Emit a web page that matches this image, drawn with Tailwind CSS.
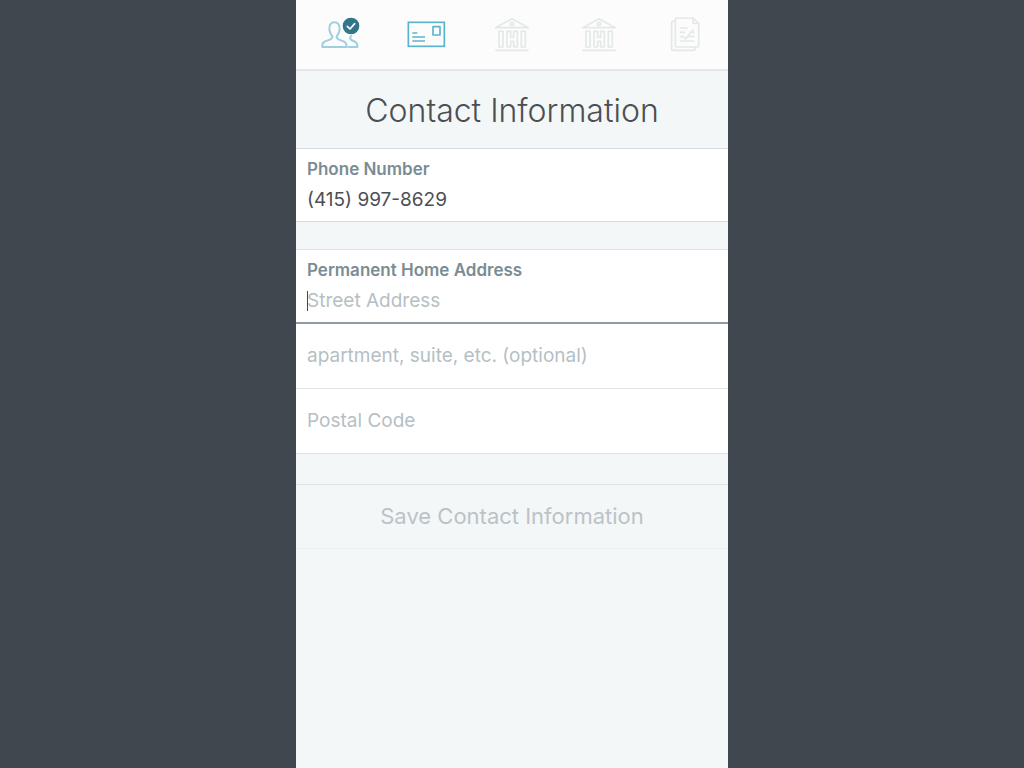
<!DOCTYPE html>
<html lang="en">
<head>
  <meta charset="UTF-8">
  <meta name="viewport" content="width=device-width, initial-scale=1">
  <title>Contact Information</title>
  <script src="https://cdn.jsdelivr.net/npm/@tailwindcss/browser@4"></script>
</head>
<body class="bg-[#40474e] font-[Inter,sans-serif] text-[#4b4f54]">
  <main class="w-full max-w-[432px] min-h-screen mx-auto bg-[#f4f7f7]">

    <!-- Step icons -->
    <nav aria-label="Steps" class="grid grid-cols-5 justify-items-center bg-[#fcfcfc] border-b-2 border-[#e3e5e7] pl-px pt-2 pb-[9px]">
      <a href="#profile" aria-label="Profile">
        <svg class="w-[60px] h-[52px]" viewBox="0 0 180 156" fill="none" stroke="#9dcfdf" stroke-width="6" stroke-linejoin="round" stroke-linecap="round">
          <path d="M37 117V112Q37 103 45 100L60 95Q67 92 67 85Q60 76 58 66Q57 43 73 43Q90 43 89 66Q87 76 80 85Q80 92 87 95L101 100Q110 104 110 117Z"/>
          <path d="M116 117H142Q143 106 136 102L124 96Q118 91 123 84"/>
          <circle cx="123" cy="54" r="25" fill="#33768a" stroke="none"/>
          <path d="M112 55L120 63L134 47" stroke="#fff" stroke-width="5"/>
        </svg>
      </a>
      <a href="#contact" aria-label="Contact" aria-current="step">
        <svg class="w-[60px] h-[52px]" viewBox="0 0 180 156" fill="none" stroke="#5bb2cd" stroke-width="5">
          <rect x="37" y="43" width="108" height="72"/>
          <rect x="111" y="56" width="21" height="25" rx="1"/>
          <path d="M49 75H64M49 87H87M49 99H87"/>
        </svg>
      </a>
      <a href="#bank" aria-label="Bank">
        <svg class="w-[60px] h-[52px]" viewBox="-3 0 180 156" fill="none" stroke="#e4e8e8" stroke-width="5" stroke-linejoin="round">
          <path d="M38 59L87 32L136 59Z"/>
          <circle cx="87" cy="48" r="5"/>
          <path d="M37 127H137"/>
          <path d="M48 70H60V117H48ZM72 70H83V88H92V70H103V117H92V100H83V117H72ZM115 70H127V117H115Z"/>
        </svg>
      </a>
      <a href="#funding" aria-label="Funding">
        <svg class="w-[60px] h-[52px]" viewBox="-3 0 180 156" fill="none" stroke="#e4e8e8" stroke-width="5" stroke-linejoin="round">
          <path d="M38 59L87 32L136 59Z"/>
          <circle cx="87" cy="48" r="5"/>
          <path d="M37 127H137"/>
          <path d="M48 70H60V117H48ZM72 70H83V88H92V70H103V117H92V100H83V117H72ZM115 70H127V117H115Z"/>
        </svg>
      </a>
      <a href="#review" aria-label="Review">
        <svg class="w-[60px] h-[52px]" viewBox="0 0 180 156" fill="none" stroke="#e4e8e8" stroke-width="5" stroke-linejoin="round">
          <path d="M66 30H114L131 46V112Q131 117 126 117H66Q61 117 61 112V35Q61 30 66 30Z"/>
          <path d="M114 30V46H131"/>
          <path d="M61 39H55Q50 39 50 44V122Q50 127 55 127H115Q120 127 120 122V117"/>
          <path d="M74 60H98M74 73H90M104 73H118M74 86H84M98 86H118M74 99H118M82 83L91 93L115 65"/>
        </svg>
      </a>
    </nav>

    <h1 class="pt-5 pb-[17px] text-center text-[32px] leading-10 font-light">Contact Information</h1>

    <form>
      <!-- Phone -->
      <div class="bg-white border-y border-[#d5dcdf] px-[11px] pt-[10px] pb-2">
        <label for="phone" class="block text-[17px] leading-5 font-semibold text-[#7a8c93]">Phone Number</label>
        <input id="phone" type="tel" value="(415) 997-8629" class="block w-full mt-2 h-[26px] text-[19px] outline-none">
      </div>

      <!-- Address -->
      <div class="mt-[27px] bg-white border-t border-[#dfe5e7]">
        <div class="border-b-2 border-[#8e9ba1] px-[11px] pt-[10px] pb-2">
          <label for="street" class="block text-[17px] leading-5 font-semibold text-[#7a8c93]">Permanent Home Address</label>
          <div class="relative mt-2">
            <input id="street" type="text" placeholder="Street Address" class="block w-full h-[26px] text-[19px] outline-none placeholder:text-[#b5bfc4]">
            <span class="absolute left-0 top-[3px] w-px h-5 bg-[#40474e]"></span>
          </div>
        </div>
        <input type="text" aria-label="Apartment" placeholder="apartment, suite, etc. (optional)" class="block w-full h-[65px] px-[11px] pb-0.5 border-b border-[#dfe5e7] text-[19px] outline-none placeholder:text-[#b5bfc4]">
        <input type="text" aria-label="Postal code" placeholder="Postal Code" class="block w-full h-[65px] px-[11px] pb-0.5 border-b border-[#dbe4e5] text-[19px] outline-none placeholder:text-[#b5bfc4]">
      </div>

      <button type="submit" disabled class="block w-full h-[65px] mt-[30px] border-t border-b border-t-[#dce2e6] border-b-[#edf1f1] text-[22px] text-[#bac3c8]">Save Contact Information</button>
    </form>
  </main>
</body>
</html>
